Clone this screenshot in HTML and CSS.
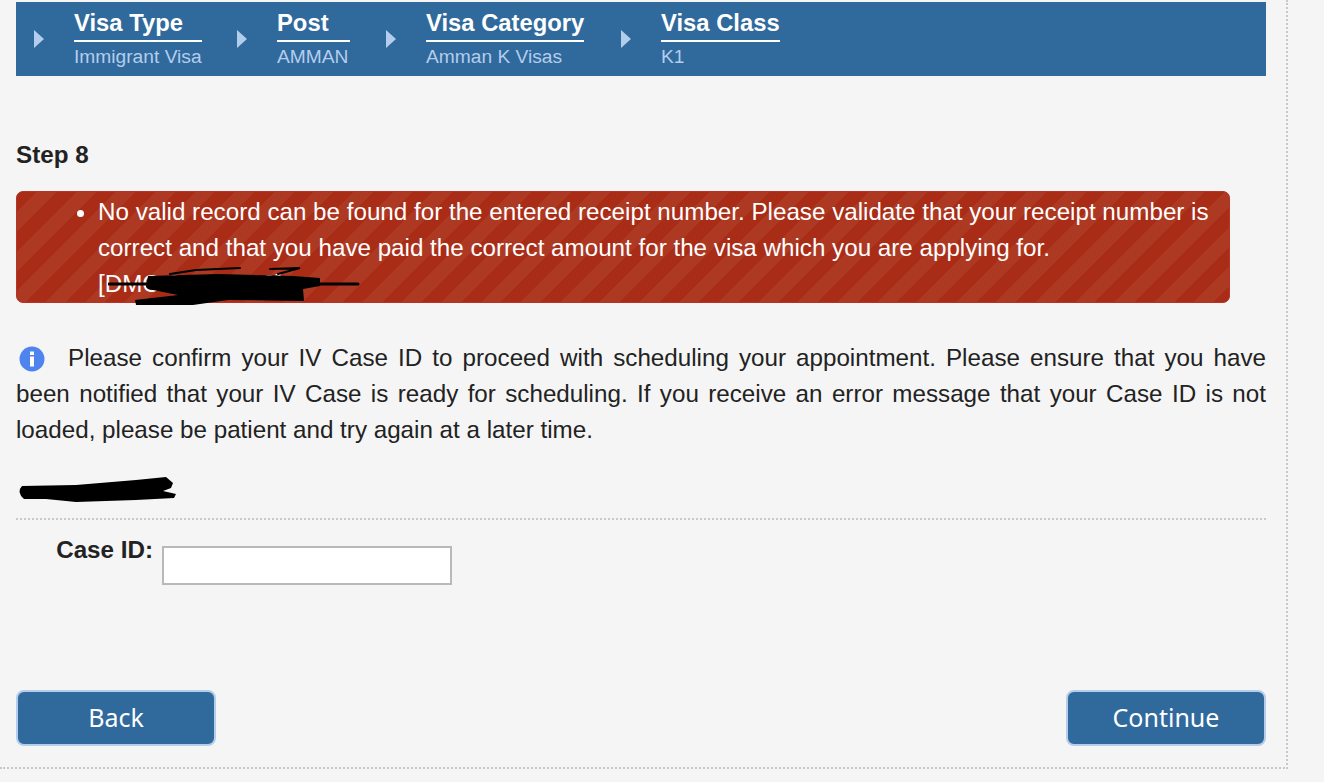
FILE: index.html
```html
<!DOCTYPE html>
<html lang="en">
<head>
    <meta charset="UTF-8">
    <title>Step 8</title>
    <link rel="stylesheet" href="styles.css">
</head>
<body>
    <div class="page">
        <div class="crumbs">
            <div class="crumb crumb-type">
                <span class="arrow"></span>
                <div class="crumb-text"><div class="crumb-title">Visa Type</div><div class="crumb-value">Immigrant Visa</div></div>
            </div>
            <div class="crumb crumb-post">
                <span class="arrow"></span>
                <div class="crumb-text"><div class="crumb-title">Post</div><div class="crumb-value">AMMAN</div></div>
            </div>
            <div class="crumb crumb-category">
                <span class="arrow"></span>
                <div class="crumb-text"><div class="crumb-title">Visa Category</div><div class="crumb-value">Amman K Visas</div></div>
            </div>
            <div class="crumb">
                <span class="arrow"></span>
                <div class="crumb-text"><div class="crumb-title">Visa Class</div><div class="crumb-value">K1</div></div>
            </div>
        </div>

        <h2 class="step">Step 8</h2>

        <div class="alert">
            <ul>
                <li>No valid record can be found for the entered receipt number. Please validate that your receipt number is correct and that you have paid the correct amount for the visa which you are applying for.<br>[DMC-00000000]</li>
            </ul>
            <svg class="scribble scribble-alert" width="252" height="40" viewBox="0 0 252 40">
                <path d="M40 9 L110 7 L185 9 L212 11 L212 19 L195 22 L196 34 L120 33 L85 38 L28 38 L27 33 L70 28 L40 22 L38 20 Z" fill="#000"/>
                <path d="M1 17 L250 17" fill="none" stroke="#000" stroke-width="3" stroke-linecap="round"/>
                <path d="M62 7 L88 3 L132 1 M162 2 L192 1 L170 7" fill="none" stroke="#000" stroke-width="2" stroke-linecap="round"/>
            </svg>
        </div>

        <p class="notice">
            <svg class="info" width="26" height="26" viewBox="0 0 26 26">
                <circle cx="13" cy="13" r="12.500" fill="#4f83ee"/>
                <rect x="11" y="5.500" width="4" height="3.500" fill="#fff"/>
                <rect x="11" y="10.500" width="4" height="10" fill="#fff"/>
            </svg>
            Please confirm your IV Case ID to proceed with scheduling your appointment. Please ensure that you have been notified that your IV Case is ready for scheduling. If you receive an error message that your Case ID is not loaded, please be patient and try again at a later time.
        </p>

        <div class="redacted">
            <svg width="160" height="28" viewBox="0 0 160 28">
                <path d="M6 9 L60 8 L120 3 L150 0 L157 6 L155 11 L147 14 L160 17 L158 21 L120 23 L60 25 L30 22 L8 22 Q0 15 6 9 Z" fill="#000"/>
            </svg>
        </div>

        <div class="case-row">
            <label class="case-label" for="case-id">Case ID:</label>
            <input class="case-input" id="case-id" type="text">
        </div>

        <div class="actions">
            <button class="btn">Back</button>
            <button class="btn">Continue</button>
        </div>
    </div>
</body>
</html>
```

FILE: styles.css
```css
:root {
    --bg-color: #f5f5f5;
    --blue: #30699c;
    --light-blue: #b4cdec;
    --text-color: #222;
    --dots: #c8c8c8;
}
html, body { height: 100%; }
body {
    margin: 0;
    background-color: var(--bg-color);
    color: var(--text-color);
    font-family: "Liberation Sans", Arial, sans-serif;
    font-size: 24.2px;
    overflow: hidden;
}
.page {
    box-sizing: border-box;
    width: 1288px;
    height: 769px;
    padding: 2px 20px 0 16px;
    border-right: 2px dotted var(--dots);
    border-bottom: 2px dotted var(--dots);
}
.crumbs {
    display: flex;
    height: 74px;
    background-color: var(--blue);
    padding-left: 18px;
}
.crumb { display: flex; align-items: center; }
.crumb-type { width: 203px; }
.crumb-post { width: 149px; }
.crumb-post .crumb-text { width: 73px; }
.crumb-category { width: 235px; }
.arrow {
    width: 0;
    height: 0;
    margin-right: 30px;
    border-left: 10px solid var(--light-blue);
    border-top: 9px solid transparent;
    border-bottom: 9px solid transparent;
}
.crumb-title {
    color: #fff;
    font-size: 23.8px;
    font-weight: bold;
    line-height: 28px;
    padding-bottom: 3px;
    border-bottom: 2px solid #fff;
}
.crumb-value {
    color: var(--light-blue);
    font-size: 19.2px;
    line-height: 29px;
    margin-bottom: -2px;
}
.step {
    margin: 62px 0 0;
    font-size: 24.2px;
    line-height: 34px;
}
.alert {
    position: relative;
    box-sizing: border-box;
    width: 1214px;
    height: 112px;
    margin-top: 19px;
    padding-top: 2px;
    border: 1px solid #b8342a;
    border-radius: 7px;
    color: #fff;
    line-height: 36px;
    background-color: #a92c17;
    background-image: repeating-linear-gradient(135deg, #a92c17 0 14px, #ad3923 14px 28px);
}
.alert ul { margin: 0; padding-left: 81px; }
.scribble { position: absolute; }
.scribble-alert { left: 91px; top: 75px; }
.notice {
    margin: 37px 0 0;
    line-height: 36px;
    text-align: justify;
}
.info {
    vertical-align: -6px;
    margin-left: 3px;
    margin-right: 13px;
}
.redacted { height: 28px; margin-top: 29px; }
.redacted svg { display: block; }
.case-row {
    display: flex;
    align-items: flex-start;
    height: 155px;
    margin-top: 13px;
    padding-top: 15px;
    border-top: 2px dotted var(--dots);
}
.case-label {
    width: 137px;
    text-align: right;
    font-weight: bold;
    line-height: 30px;
    margin-right: 9px;
}
.case-input {
    box-sizing: border-box;
    width: 290px;
    height: 39px;
    margin-top: 11px;
    background-color: #fff;
    border: 2px solid #b9b9b9;
}
.actions { display: flex; justify-content: space-between; }
.btn {
    width: 200px;
    height: 56px;
    padding: 0 0 2px;
    color: #fff;
    font-family: "Noto Sans", sans-serif;
    font-size: 25px;
    background-color: var(--blue);
    border: 2px solid var(--light-blue);
    border-radius: 8px;
}
```
